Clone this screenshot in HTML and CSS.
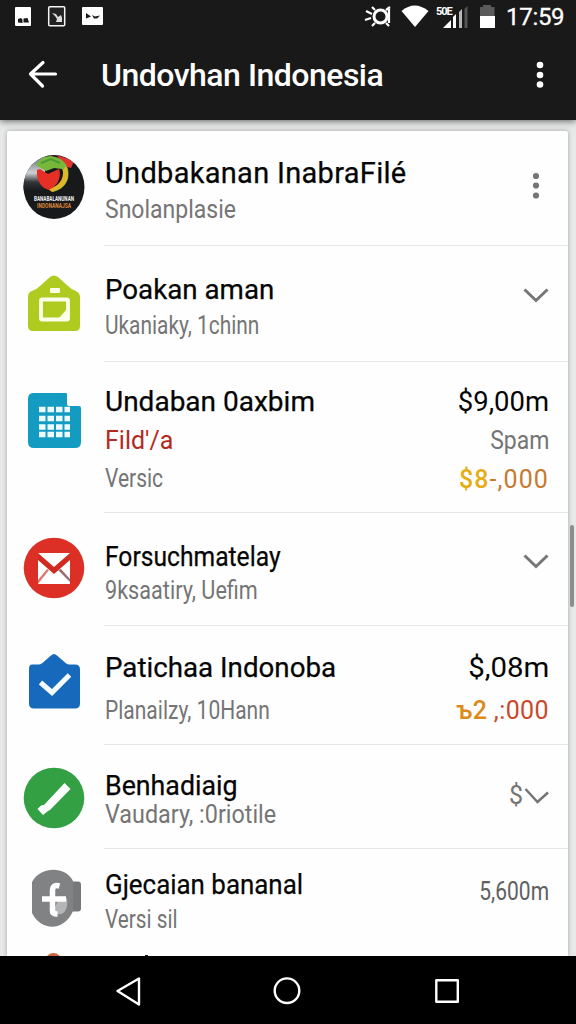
FILE: index.html
```html
<!DOCTYPE html>
<html lang="id">
<head>
<meta charset="utf-8">
<title>Undovhan Indonesia</title>
<link rel="stylesheet" href="styles.css">
</head>
<body>
<div class="screen">
  <header class="appbar">
    <div class="status">
      <svg class="status-left" width="110" height="32" viewBox="0 0 110 32">
        <rect x="15" y="7" width="16" height="19" rx="1" fill="#fff"/>
        <path d="M18 22.500V19l3-1 1.500 1.500V23zM23.500 22.500V18.500l4-.5 1.500 4.500z" fill="#191919"/>
        <rect x="48.700" y="6.700" width="16" height="19" rx="1" fill="#222" stroke="#f4f4f4" stroke-width="1.500"/>
        <path d="M52 13l4 1 2 3 3-2 1 3v4h-6l1-3-2-3z" fill="#ddd"/>
        <rect x="82" y="7" width="21" height="18" rx="1" fill="#fff"/>
        <path d="M86 13l5 3.500-5 2zM92 15l3 1.500 5-1-3 3h-3z" fill="#191919"/>
      </svg>
      <div class="status-right">
        <svg width="136" height="32" viewBox="0 0 136 32">
          <g fill="none" stroke="#fff">
            <circle cx="19.500" cy="16.500" r="6.500" stroke-width="3"/>
            <path d="M14 10l-3-3M25 10l4-3M14 23l-3 3M25 23l3 3M5 11l6 3M4 20l6-2M28 9v14" stroke-width="2.200"/>
          </g>
          <path d="M40.500 11Q53.500 0 67.500 11L54 27z" fill="#fff"/>
          <text class="net" x="75" y="14.500">50E</text>
          <path d="M82 28l8-8v8z" fill="#fff"/>
          <path d="M92 17l3-3v14h-3z" fill="#fff"/>
          <path d="M98 12l3-3v19h-3z" fill="#b8b8b8"/>
          <path d="M103.500 9l3-3v22h-3z" fill="#555"/>
          <path d="M119 7h3V5h8v2h3.500v10H119z" fill="#5a5a5a"/>
          <path d="M119 16h15v12h-15z" fill="#fff"/>
        </svg>
        <span class="clock">17:59</span>
      </div>
    </div>
    <div class="toolbar">
      <svg class="back" width="30" height="30" viewBox="0 0 30 30"><path d="M27.500 14H3M15 2.500L2.500 14 14.500 26" fill="none" stroke="#fff" stroke-width="3.200" stroke-linecap="round" stroke-linejoin="round"/></svg>
      <h1 class="heading">Undovhan Indonesia</h1>
      <svg width="8" height="28" viewBox="0 0 8 28" fill="#fff"><circle cx="4" cy="4" r="3.300"/><circle cx="4" cy="14" r="3.300"/><circle cx="4" cy="23.500" r="3.300"/></svg>
    </div>
  </header>

  <main class="content">
    <div class="card">
      <section class="row row-profile">
        <svg class="icon" width="62" height="64" viewBox="0 0 62 64">
          <defs>
            <clipPath id="avatar"><ellipse cx="31" cy="32" rx="30.500" ry="32"/></clipPath>
            <linearGradient id="shine" x2="0" y2="1"><stop offset=".2" stop-color="#8b8f92"/><stop offset=".5" stop-color="#d0d2d4"/><stop offset=".75" stop-color="#33373a"/><stop offset="1" stop-color="#17191b"/></linearGradient>
          </defs>
          <g clip-path="url(#avatar)">
            <rect width="62" height="64" fill="#17191b"/>
            <path d="M0 0h22v36H0z" fill="url(#shine)"/>
            <path d="M34 0l17 6-3 7-8-2z" fill="#df3430"/>
            <path d="M13 10Q18 1 28 1q14 2 17 13c3 15-8 22-16 23 10-7 14-15 10-23l-8-1-8 3z" fill="#77b83a"/>
            <path d="M43 11c6 13-2 23-14 26l-4-3c10-2 16-9 15-19z" fill="#e1b72a"/>
            <path d="M14 15l3-1 8 5 11-5c3 9-2 17-10 21-8-2-13-10-12-20z" fill="#e72f25"/>
            <path d="M18 8l10-4 9 4" fill="none" stroke="#4a9b35" stroke-width="2"/>
          </g>
          <text class="logo-a" x="11" y="46" textLength="40" lengthAdjust="spacingAndGlyphs">BANABALANUNAN</text>
          <text class="logo-b" x="14" y="53" textLength="34" lengthAdjust="spacingAndGlyphs">INDONANAJSA</text>
        </svg>
        <div class="lines"><h2 class="title">Undbakanan InabraFilé</h2><p class="sub">Snolanplasie</p></div>
        <div class="end"><svg width="26" height="28" viewBox="0 0 26 28" fill="#757575"><circle cx="13" cy="4" r="3.100"/><circle cx="13" cy="13.500" r="3.100"/><circle cx="13" cy="23.500" r="3.100"/></svg></div>
      </section>

      <section class="row row-green">
        <svg class="icon" width="62" height="64" viewBox="0 0 62 64">
          <path d="M9 17q4-1 8-5l10-9q4-3 8 0l10 9q4 4 8 5 4 2 4 6v29q0 5-5 5H10q-5 0-5-5V23q0-5 4-6z" fill="#b0cb1f"/>
          <rect x="27" y="14" width="10" height="5" rx="1" fill="#fbffe9"/>
          <rect x="18" y="25.500" width="27" height="20" rx="1" fill="none" stroke="#fbffe9" stroke-width="3.800"/>
          <path d="M36 44l8-9v9z" fill="#fbffe9"/>
        </svg>
        <div class="lines"><h2 class="title">Poakan aman</h2><p class="sub">Ukaniaky, 1chinn</p></div>
        <div class="end"><svg width="26" height="16" viewBox="0 0 26 16"><path class="chevron" d="M1.500 1.500L13 12.500 24.500 1.500"/></svg></div>
      </section>

      <section class="row row-sheet">
        <svg class="icon" width="62" height="64" viewBox="0 0 62 64">
          <path d="M10 3h33q1 0 1 1v10q0 2 2 2h10q2 0 2 2v34q0 6-6 6H11q-6 0-6-6V9q0-6 5-6z" fill="#139bc1"/>
          <path d="M16 19.500h31M16 28.500h31M16 37h31M16 44.500h31" fill="none" stroke="#effcff" stroke-width="5.500" stroke-dasharray="6.500 2"/>
        </svg>
        <div class="lines"><h2 class="title">Undaban 0axbim</h2><p class="sub red">Fild'/a</p><p class="sub narrow">Versic</p></div>
        <div class="end amounts"><span class="amount">$9,00m</span><span class="note">Spam</span><span class="money"><b class="gold">$8</b>-,000</span></div>
      </section>

      <section class="row row-mail">
        <svg class="icon" width="62" height="64" viewBox="0 0 62 64">
          <circle cx="31" cy="32" r="30.300" fill="#dc3026"/>
          <path d="M15 17h32v31H15z" fill="#fff"/>
          <path d="M15 17v7l16 14 16-14v-7L31 31z" fill="#d02b22"/>
          <path d="M26 34L15 48v-4l9-11z" fill="#df7770"/>
          <path d="M35 34l12 12v-3l-9-10z" fill="#9d6c72"/>
        </svg>
        <div class="lines"><h2 class="title">Forsuchmatelay</h2><p class="sub">9ksaatiry, Uefim</p></div>
        <div class="end"><svg width="26" height="16" viewBox="0 0 26 16"><path class="chevron" d="M1.500 1.500L13 12.500 24.500 1.500"/></svg></div>
      </section>

      <section class="row row-task">
        <svg class="icon" width="62" height="64" viewBox="0 0 62 64">
          <path d="M9 13.500h7q2 0 4-2l8-7q3-3 6 0l8 7q2 2 4 2h6q5 0 5 5v34q0 5-5 5H11q-5 0-5-5V18q0-4.500 3-4.500z" fill="#1769bb"/>
          <path d="M17.500 31.500L29 41.500 46.500 24" fill="none" stroke="#f4fbff" stroke-width="5"/>
        </svg>
        <div class="lines"><h2 class="title">Patichaa Indonoba</h2><p class="sub">Planailzy, 10Hann</p></div>
        <div class="end amounts"><span class="amount">$,08m</span><span class="money hot"><b class="amber">ъ2</b> ,:000</span></div>
      </section>

      <section class="row row-edit">
        <svg class="icon" width="62" height="64" viewBox="0 0 62 64">
          <circle cx="31" cy="32" r="30.300" fill="#34a044"/>
          <path d="M41.500 17l6 6L27 44l-2 1-5 4-5.500-6 3.500-3.500 3-.5z" fill="#fff"/>
        </svg>
        <div class="lines"><h2 class="title">Benhadiaig</h2><p class="sub">Vaudary, :0riotile</p></div>
        <div class="end"><span class="note">$</span><svg width="26" height="17" viewBox="0 0 26 17"><path class="chevron thin" d="M2.500 1L14.500 14 25 4.500"/></svg></div>
      </section>

      <section class="row row-social">
        <svg class="icon" width="62" height="64" viewBox="0 0 62 64">
          <path d="M45 15.500h10q3 0 3 3v24q0 3-3 3H45z" fill="#76787a"/>
          <path d="M9 16C18 0 42 0 50 15v30C41 66 18 65 9 47z" fill="#808284"/>
          <path d="M30 46c8 6 16 0 14-14h-8z" fill="#b4b5b7"/>
          <path d="M36.500 20q-7-2-7 5V45q0 3 5 3M19 33h24" fill="none" stroke="#fff" stroke-width="5.500"/>
        </svg>
        <div class="lines"><h2 class="title">Gjecaian bananal</h2><p class="sub">Versi sil</p></div>
        <div class="end"><span class="note dark">5,600m</span></div>
      </section>

      <svg class="peek" width="561" height="4" viewBox="0 0 561 4"><circle cx="46.500" cy="8" r="8" fill="#cb663e"/><path d="M138 2h3v2h-3zM200 3h3v1h-3z" fill="#111"/></svg>
    </div>
    <div class="scrollbar"></div>
  </main>

  <nav class="navbar">
    <svg width="576" height="68" viewBox="0 0 576 68" fill="none" stroke="#fff" stroke-width="2.400" stroke-linejoin="round">
      <path d="M117.500 35L139 22.500v26z"/><circle cx="287" cy="34.700" r="12.300"/><rect x="436.300" y="24.300" width="21.500" height="21.500"/>
    </svg>
  </nav>
</div>
</body>
</html>
```
FILE: styles.css
```css
* { box-sizing: border-box; }
body { margin: 0; font-family: Roboto, "Liberation Sans", sans-serif; }
h1, h2, p { margin: 0; font-weight: 400; white-space: nowrap; }
svg { display: block; flex: none; }

.screen { width: 576px; height: 1024px; display: flex; flex-direction: column; overflow: hidden; background: #e7e9e9; }

.appbar { height: 120px; flex: none; background: #191919; color: #fff; box-shadow: 0 1px 7px rgba(0, 0, 0, .6); z-index: 1; }
.status { height: 32px; display: flex; justify-content: space-between; }
.status-right { display: flex; width: 215px; }
.clock { font-size: 24px; line-height: 35px; margin-left: 9px; letter-spacing: -.3px; -webkit-text-stroke: .3px #fff; }
.net { font: 700 11px Roboto, sans-serif; fill: #fff; letter-spacing: -1px; }
.toolbar { height: 86px; display: flex; align-items: center; padding: 0 32px 0 28px; }
.heading { flex: 1; margin-left: 43px; font-size: 32px; font-weight: 500; letter-spacing: -.5px; }

.content { height: 836px; flex: none; display: flex; padding: 11px 0 0 7px; }
.card { width: 561px; height: 825px; display: flex; flex-direction: column; background: #fefefe; border-radius: 2px 2px 0 0; box-shadow: 0 0 4px rgba(0, 0, 0, .3); overflow: hidden; }
.scrollbar { width: 4px; height: 82px; margin: 394px 0 0 2px; border-radius: 2px; background: #8b8d8d; }

.row { display: flex; flex: none; align-items: flex-start; }
.icon { margin-left: 16px; }
.lines { flex: 1; margin-left: 19px; padding-left: 1px; align-self: stretch; border-bottom: 1px solid #e6e8e8; }
.end { display: flex; align-self: stretch; align-items: flex-start; padding-right: 19px; border-bottom: 1px solid #e6e8e8; }
.title, .amount { font-size: 28px; line-height: 32px; color: #050505; }
.title { -webkit-text-stroke: .25px #050505; }
.sub, .note, .money { font-size: 25px; line-height: 30px; color: #757575; }
.title, .sub { width: max-content; transform-origin: left; }
.amount, .note, .money { transform-origin: right; }
.sub.red { color: #b32a20; }
.sub.narrow { transform: scaleX(.84); }
.amounts { flex-direction: column; align-items: flex-end; }
.money { color: #c87930; }
.money.hot { color: #c9492b; }
.gold, .amber { font-weight: 500; color: #e5ae16; }
.amber { color: #dc8a18; }
.note.dark { color: #606060; }
.chevron { fill: none; stroke: #757575; stroke-width: 3; }
.thin { stroke-width: 2.500; }
.logo-a, .logo-b { font: 700 7px Roboto, sans-serif; fill: #f2f2f2; }
.logo-b { fill: #dc8739; }

.row-profile { height: 115px; }
.row-profile .icon { margin-top: 24px; }
.row-profile .lines { padding-top: 26px; }
.row-profile .title { font-size: 29px; letter-spacing: .3px; }
.row-profile .sub { margin-top: 6px; transform: scaleX(.92); }
.row-profile .end { padding-top: 41px; }

.row-green { height: 116px; }
.row-green .icon { margin-top: 28px; }
.row-green .lines { padding-top: 28px; }
.row-green .title { transform: scaleX(.99); }
.row-green .sub { margin-top: 5px; transform: scaleX(.835); }
.row-green .end { padding-top: 42px; }

.row-sheet { height: 151px; }
.row-sheet .icon { margin-top: 28px; }
.row-sheet .lines, .row-sheet .end { padding-top: 24px; }
.row-sheet .sub, .row-sheet .note { margin-top: 8px; }
.row-sheet .note { transform: scaleX(.92); }
.row-sheet .amount { transform: scaleX(.98); }
.row-sheet .money { margin-top: 9px; letter-spacing: 1.1px; }

.row-mail { height: 113px; }
.row-mail .icon { margin-top: 23px; }
.row-mail .lines { padding-top: 28px; }
.row-mail .title { transform: scaleX(.88); }
.row-mail .sub { margin-top: 3px; transform: scaleX(.865); }
.row-mail .end { padding-top: 41px; }

.row-task { height: 119px; }
.row-task .icon { margin-top: 25px; }
.row-task .lines, .row-task .end { padding-top: 26px; }
.row-task .title { transform: scaleX(.99); }
.row-task .amount { transform: scaleX(1.05); }
.row-task .sub, .row-task .money { margin-top: 12px; }
.row-task .sub { transform: scaleX(.84); }
.row-task .money { letter-spacing: .4px; }

.row-edit { height: 104px; }
.row-edit .icon { margin-top: 21px; }
.row-edit .lines { padding-top: 25px; }
.row-edit .title { transform: scaleX(.955); }
.row-edit .sub { margin-top: -2px; transform: scaleX(.934); }
.row-edit .end { padding-top: 36px; }
.row-edit .end svg { margin-top: 7px; }

.row-social { height: 103px; }
.row-social .icon { margin-top: 17px; }
.row-social .lines, .row-social .end { border-bottom: 0; }
.row-social .lines { padding-top: 20px; }
.row-social .title { transform: scaleX(.925); }
.row-social .sub { margin-top: 4px; transform: scaleX(.83); }
.row-social .end { padding-top: 28px; }
.row-social .note { transform: scaleX(.84); }

.peek { margin-top: 1px; }
.navbar { height: 68px; flex: none; background: #000; z-index: 1; }
```
